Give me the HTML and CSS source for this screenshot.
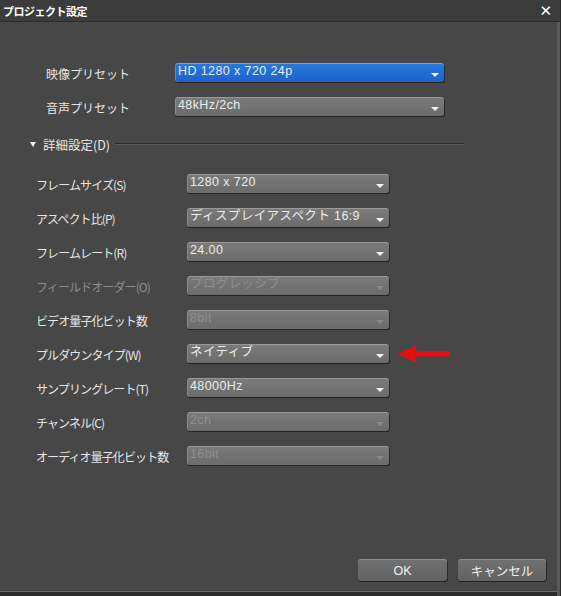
FILE: index.html
```html
<!DOCTYPE html>
<html lang="ja">
<head>
<meta charset="UTF-8">
<title>プロジェクト設定</title>
<link rel="stylesheet" href="styles.css">
</head>
<body>

<div class="window">
  <div class="titlebar">
    <span class="title">プロジェクト設定</span>
    <span class="close">✕</span>
  </div>

  <div class="content">
    <div class="presets">
      <div class="row">
        <span class="label">映像プリセット</span>
        <div class="select blue"><span>HD 1280 x 720 24p</span><i class="arrow"></i></div>
      </div>
      <div class="row">
        <span class="label">音声プリセット</span>
        <div class="select"><span>48kHz/2ch</span><i class="arrow"></i></div>
      </div>
    </div>

    <div class="group-head">
      <i class="tri"></i>
      <span>詳細設定(D)</span>
      <div class="rule"></div>
    </div>

    <div class="details">
      <div class="row">
        <span class="label">フレームサイズ(S)</span>
        <div class="select"><span>1280 x 720</span><i class="arrow"></i></div>
      </div>
      <div class="row">
        <span class="label">アスペクト比(P)</span>
        <div class="select"><span>ディスプレイアスペクト 16:9</span><i class="arrow"></i></div>
      </div>
      <div class="row">
        <span class="label">フレームレート(R)</span>
        <div class="select"><span>24.00</span><i class="arrow"></i></div>
      </div>
      <div class="row off">
        <span class="label">フィールドオーダー(O)</span>
        <div class="select"><span>プログレッシブ</span><i class="arrow"></i></div>
      </div>
      <div class="row">
        <span class="label">ビデオ量子化ビット数</span>
        <div class="select dim"><span>8bit</span><i class="arrow"></i></div>
      </div>
      <div class="row">
        <span class="label">プルダウンタイプ(W)</span>
        <div class="select"><span>ネイティブ</span><i class="arrow"></i></div>
        <!-- red pointer marking the pull-down row -->
        <svg class="pointer" width="56" height="20" viewBox="0 0 56 20">
          <path d="M18 7 H54 V12.5 H18 Z" fill="#e01010"/>
          <path d="M1 10 L21 1 L18 10 L21 19 Z" fill="#e01010"/>
        </svg>
      </div>
      <div class="row">
        <span class="label">サンプリングレート(T)</span>
        <div class="select"><span>48000Hz</span><i class="arrow"></i></div>
      </div>
      <div class="row">
        <span class="label">チャンネル(C)</span>
        <div class="select dim"><span>2ch</span><i class="arrow"></i></div>
      </div>
      <div class="row">
        <span class="label">オーディオ量子化ビット数</span>
        <div class="select dim"><span>16bit</span><i class="arrow"></i></div>
      </div>
    </div>
  </div>

  <div class="footer">
    <button class="ok">OK</button>
    <button class="cancel">キャンセル</button>
  </div>
</div>

</body>
</html>
```

FILE: styles.css
```css
html, body {
  margin: 0;
  padding: 0;
  background-color: #474747;
  font-family: "Liberation Sans", "Noto Sans CJK JP", sans-serif;
}
.window {
  width: 561px;
  height: 596px;
  box-sizing: border-box;
  display: flex;
  flex-direction: column;
  background-color: #474747;
  border-right: 1px solid #2a2a2a;
  box-shadow: inset -3px 0 0 #595959, inset 0 -4px 0 #2b2b2b, inset 0 -5px 0 #6a6a6a;
}
.titlebar {
  height: 21px;
  display: flex;
  align-items: center;
  justify-content: space-between;
  padding: 0 8px 0 3px;
  background-color: #3c3c3c;
  border-bottom: 1px solid #2c2c2c;
  color: #fff;
}
.title {
  font-family: "Noto Sans CJK JP", sans-serif;
  font-weight: bold;
  font-size: 11px;
  letter-spacing: -0.5px;
}
.close {
  font-family: "DejaVu Sans", sans-serif;
  font-weight: bold;
  font-size: 15px;
}
.content {
  flex: 1;
  padding-top: 41px;
}
.row {
  display: flex;
  align-items: center;
  height: 19px;
  margin-bottom: 15px;
}
.label {
  font-family: "Noto Sans CJK JP", sans-serif;
  font-size: 12px;
  letter-spacing: -0.9px;
  color: #e6e6e6;
  padding-top: 2px;
}
.presets .label {
  width: 129px;
  padding-left: 46px;
  letter-spacing: 0;
}
.presets .select {
  width: 269px;
}
.details .label {
  width: 151px;
  padding-left: 36px;
}
.details .select {
  width: 202px;
}
.row.off .label {
  color: #8c8c8c;
}
.select {
  height: 19px;
  box-sizing: border-box;
  display: flex;
  align-items: flex-end;
  justify-content: space-between;
  padding: 0 5px 4px 2px;
  background: linear-gradient(#7a7a7a, #6b6b6b);
  border-top: 1px solid #9a9a9a;
  border-left: 1px solid #8a8a8a;
  border-radius: 3px;
  box-shadow: 0 1px 0 #222, 1px 1px 0 #2a2a2a;
  color: #ececec;
  font-size: 12.5px;
  line-height: 14px;
}
.select span {
  font-family: "Liberation Sans", "Noto Sans CJK JP", sans-serif;
  letter-spacing: 0.4px;
}
.select.blue {
  background: linear-gradient(#2878e0, #1b63c8);
  border-top-color: #6aa4ee;
  border-left-color: #4c8ce2;
}
.row.off .select, .select.dim {
  color: #8e8e8e;
}
.arrow {
  width: 0;
  height: 0;
  border-left: 4px solid transparent;
  border-right: 4px solid transparent;
  border-top: 4px solid #f4f4f4;
  margin-bottom: 1px;
}
.row.off .arrow, .select.dim .arrow {
  border-top-color: #8a8a8a;
}
.pointer {
  margin-left: 7px;
}
.group-head {
  display: flex;
  align-items: center;
  height: 16px;
  margin: 20px 0 22px 30px;
  color: #e6e6e6;
  font-family: "Noto Sans CJK JP", sans-serif;
  font-size: 12.5px;
}
.tri {
  width: 0;
  height: 0;
  border-left: 3.5px solid transparent;
  border-right: 3.5px solid transparent;
  border-top: 5px solid #f0f0f0;
  margin-right: 7px;
}
.rule {
  width: 349px;
  margin-left: 5px;
  border-top: 1px solid #2a2a2a;
  border-bottom: 1px solid #5a5a5a;
}
.footer {
  display: flex;
  justify-content: flex-end;
  gap: 11px;
  padding: 0 14px 15px 0;
}
.footer button {
  height: 22px;
  border: none;
  border-top: 1px solid #8e8e8e;
  border-radius: 3px;
  background: linear-gradient(#707070, #626262);
  box-shadow: 0 1px 0 #222, 1px 1px 0 #2a2a2a;
  color: #f2f2f2;
  font-family: "Liberation Sans", "Noto Sans CJK JP", sans-serif;
  font-size: 12.5px;
  padding: 0;
}
.footer .ok {
  width: 89px;
}
.footer .cancel {
  width: 88px;
}
```
